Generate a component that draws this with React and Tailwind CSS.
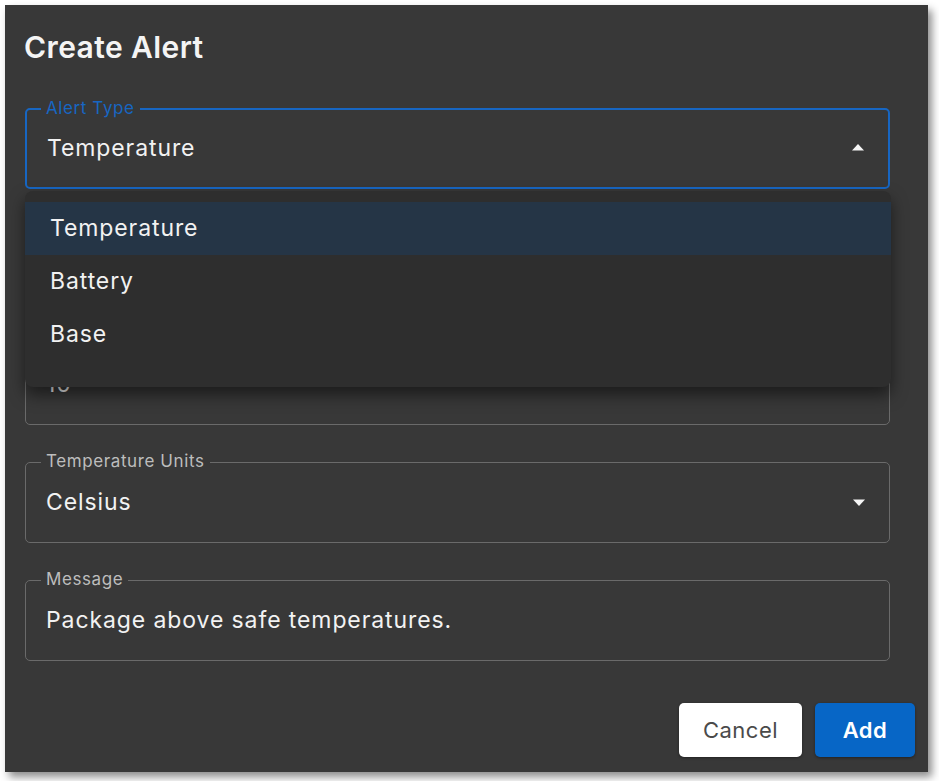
import React from 'react'

const font = { fontFamily: 'Inter, "Noto Sans", sans-serif' }

function Field({ label, value, focused, arrow }) {
  return (
    <div
      className={`relative h-[81px] w-[865px] rounded-[5px] border ${
        focused ? 'border-2 border-[#1766c2]' : 'border-[#6a6a6a]'
      }`}
    >
      {label && (
        <span
          className={`absolute -top-[12px] bg-[#383838] px-[5px] text-[17px] leading-[20px] tracking-[0.6px] ${
            focused ? 'left-[14px] text-[#1766c2]' : 'left-[15px] text-[#bdbdbd]'
          }`}
        >
          {label}
        </span>
      )}
      <div className="flex h-full items-center justify-between pl-[20px] pr-[20px]">
        <span className="text-[23px] tracking-[0.9px] text-[#f2f2f2]">{value}</span>
        {arrow === 'up' && (
          <svg width="14" height="8" viewBox="0 0 14 8" className="mr-[3px] mb-[4px]">
            <path d="M1 7.5 L7 1 L13 7.5 Z" fill="#f5f5f5" />
          </svg>
        )}
        {arrow === 'down' && (
          <svg width="14" height="8" viewBox="0 0 14 8" className="mr-[3px]">
            <path d="M1 0.5 L7 7 L13 0.5 Z" fill="#f5f5f5" />
          </svg>
        )}
      </div>
    </div>
  )
}

export default function App() {
  const options = ['Temperature', 'Battery', 'Base']

  return (
    <div className="min-h-screen bg-white pl-[5px] pt-[5px]" style={font}>
      <div className="relative h-[767px] w-[923px] bg-[#383838] pl-[19px] pt-[24px] shadow-[4px_5px_8px_rgba(0,0,0,0.45)]">
        <h1 className="text-[30px] font-semibold leading-[36px] tracking-[0.4px] text-[#f4f4f4]">Create Alert</h1>

        <div className="mt-[43px] flex flex-col gap-[37px] pl-[1px]">
          <Field label="Alert Type" value="Temperature" focused arrow="up" />
          <Field label="Threshold Type" value="Above" arrow="down" />
          <Field label="Threshold" value="10" />
          <Field label="Temperature Units" value="Celsius" arrow="down" />
          <Field label="Message" value="Package above safe temperatures." />
        </div>

        <div className="mt-[42px] flex justify-end gap-[13px] pr-[13px]">
          <button className="h-[54px] w-[123px] rounded-[5px] bg-white text-[22px] tracking-[0.5px] text-[#4a4a4a] shadow-[0_1px_3px_rgba(0,0,0,0.4)]">
            Cancel
          </button>
          <button className="h-[54px] w-[100px] rounded-[5px] bg-[#0766c6] text-[22px] font-semibold tracking-[0.5px] text-white shadow-[0_1px_3px_rgba(0,0,0,0.4)]">
            Add
          </button>
        </div>

        {/* open dropdown menu */}
        <div className="absolute left-[20px] top-[186px] w-[866px] rounded-[8px] bg-[#2e2e2e] pt-[11px] pb-[26px] shadow-[0_8px_16px_rgba(0,0,0,0.5)]">
          {options.map((o, i) => (
            <div
              key={o}
              className={`flex h-[53px] items-center pl-[25px] text-[23px] tracking-[0.9px] text-[#f2f2f2] ${
                i === 0 ? 'bg-[#253546]' : ''
              }`}
            >
              {o}
            </div>
          ))}
        </div>
      </div>
    </div>
  )
}
